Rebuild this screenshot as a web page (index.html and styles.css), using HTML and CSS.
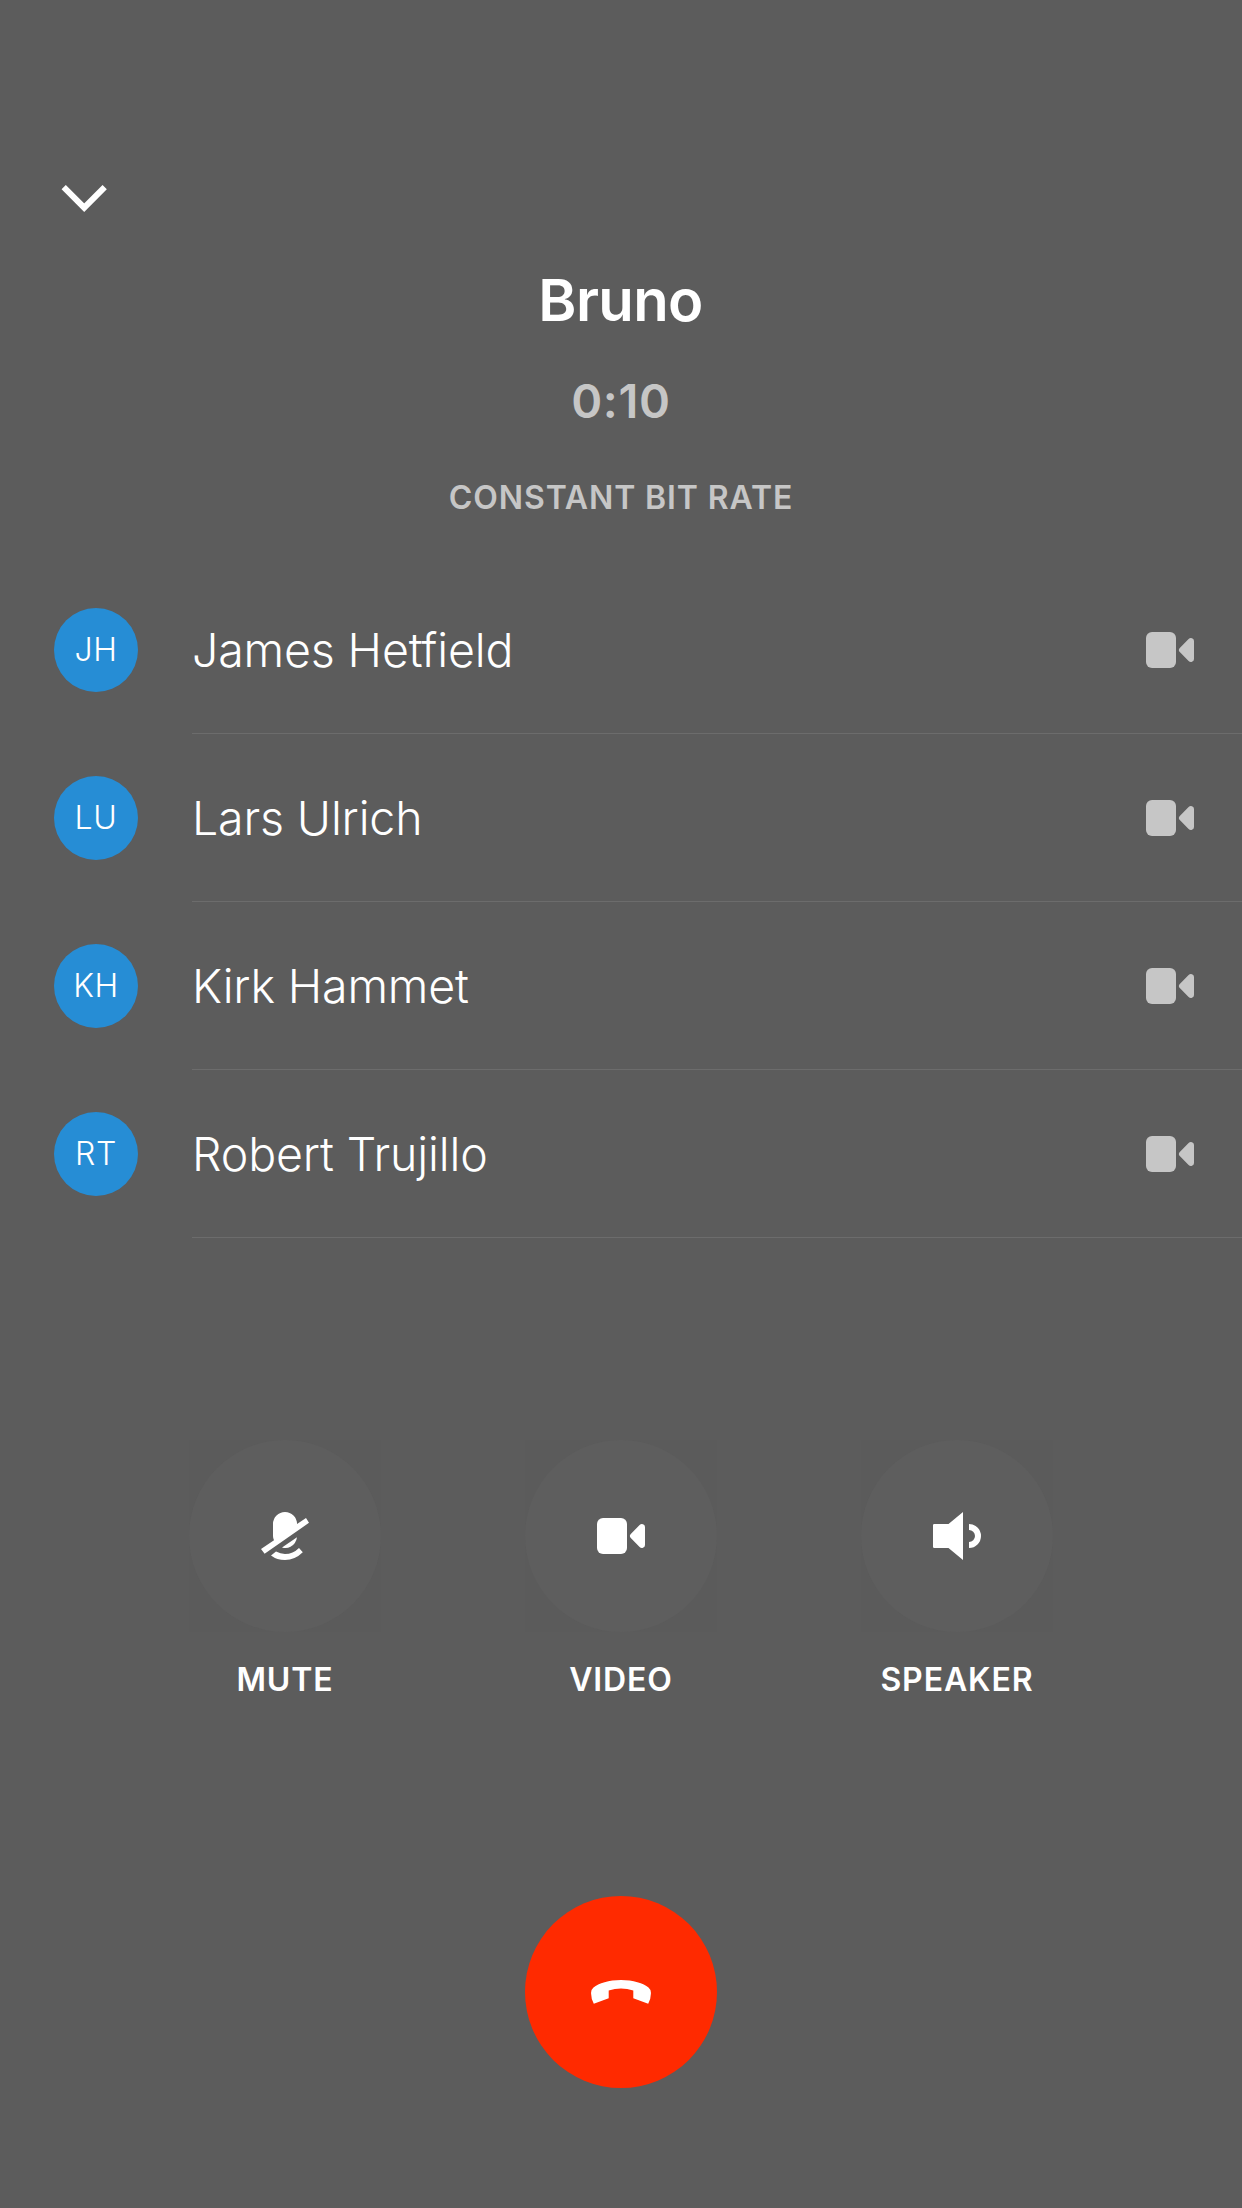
FILE: index.html
```
<!DOCTYPE html>
<html lang="en">
<head>
  <meta charset="utf-8">
  <title>Bruno</title>
  <link rel="stylesheet" href="styles.css">
</head>
<body>
  <svg class="sprite" aria-hidden="true">
    <symbol id="camera" viewBox="0 0 48 36">
      <rect width="30" height="36" rx="6"/>
      <path d="M33.8 15.9 42.6 7Q44 5.6 46 6.2Q48 6.8 48 9V27Q48 29.2 46 29.8Q44 30.4 42.6 29L33.8 20.1Q31.9 18 33.8 15.9Z"/>
    </symbol>
  </svg>

  <main class="call">
    <button class="minimize" aria-label="Minimize">
      <svg width="46" height="28" viewBox="0 0 46 28"><path d="M2.7 2.1 23.2 22.7 43.7 2.1" fill="none" stroke="#fff" stroke-width="6"/></svg>
    </button>

    <header class="header">
      <h1 class="title">Bruno</h1>
      <div class="timer">0:10</div>
      <div class="bitrate">CONSTANT BIT RATE</div>
    </header>

    <ul class="people">
      <li class="person">
        <span class="avatar">JH</span>
        <div class="info"><span class="name">James Hetfield</span><svg class="camera"><use href="#camera"/></svg></div>
      </li>
      <li class="person">
        <span class="avatar">LU</span>
        <div class="info"><span class="name">Lars Ulrich</span><svg class="camera"><use href="#camera"/></svg></div>
      </li>
      <li class="person">
        <span class="avatar">KH</span>
        <div class="info"><span class="name">Kirk Hammet</span><svg class="camera"><use href="#camera"/></svg></div>
      </li>
      <li class="person">
        <span class="avatar">RT</span>
        <div class="info"><span class="name">Robert Trujillo</span><svg class="camera"><use href="#camera"/></svg></div>
      </li>
    </ul>

    <div class="controls">
      <button class="control">
        <span class="tile"><span class="disc">
          <svg width="48" height="48" viewBox="0 0 48 48">
            <path d="M12 12a12 12 0 0 1 24 0L45 6l3 4.8L3.6 41.7 0 37l13-8.7Q12 26.5 12 24Z"/>
            <path d="M36 25.3Q35 32 29.5 34.8Q25.5 36.8 21 35.4Z"/>
            <path d="M15 39.6Q19.5 42 24 42Q32 42 38 36L41.8 40.3Q34 48 24 48Q16 48 10 43.4Z"/>
          </svg>
        </span></span>
        <span class="label">MUTE</span>
      </button>
      <button class="control">
        <span class="tile"><span class="disc"><svg width="48" height="36"><use href="#camera"/></svg></span></span>
        <span class="label">VIDEO</span>
      </button>
      <button class="control">
        <span class="tile"><span class="disc">
          <svg width="48" height="48" viewBox="0 0 48 48">
            <path d="M1.2 12H15.5L30 0V48L15.5 36H1.2Q0 36 0 34.8V13.2Q0 12 1.2 12Z"/>
            <path d="M36 12a12 12 0 0 1 0 24v-6a6 6 0 0 0 0-12Z"/>
          </svg>
        </span></span>
        <span class="label">SPEAKER</span>
      </button>
    </div>

    <button class="hangup" aria-label="End call">
      <svg width="60" height="24" viewBox="0 0 60 24"><path d="M30 0C42 0 52.5 3.2 57.5 7.6Q59.7 9.5 59.9 12.5Q60.2 18 57.2 23.8L42.3 18.3V10.5Q30 6.4 17.7 10.5V18.3L2.8 23.8Q-.2 18 .1 12.5Q.3 9.5 2.5 7.6C7.5 3.2 18 0 30 0Z"/></svg>
    </button>
  </main>
</body>
</html>
```
FILE: styles.css
```
* {
  box-sizing: border-box;
}

body {
  margin: 0;
  background: #5c5c5c;
  color: #fff;
  font-family: Inter, "Liberation Sans", sans-serif;
}

svg {
  display: block;
  fill: currentColor;
}

button {
  padding: 0;
  border: 0;
  background: none;
  color: inherit;
  font: inherit;
}

.sprite {
  width: 0;
  height: 0;
  float: left;
}

.call {
  display: flex;
  flex-direction: column;
  height: 2208px;
  padding-top: 185px;
}

.minimize {
  align-self: flex-start;
  height: 28px;
  margin-left: 61px;
}

.header {
  display: flex;
  flex-direction: column;
  align-items: center;
  height: 353px;
  padding-top: 52px;
}

.title {
  margin: 0;
  padding-right: 1px;
  font-size: 58px;
  font-weight: 600;
  line-height: 70px;
  letter-spacing: -0.64px;
}

.timer {
  margin-top: 36px;
  color: #c6c6c6;
  font-size: 47px;
  font-weight: 600;
  line-height: 60px;
  letter-spacing: 0.7px;
}

.bitrate {
  margin-top: 47px;
  color: #c6c6c6;
  font-size: 32px;
  font-weight: 600;
  line-height: 40px;
  letter-spacing: 0.88px;
}

.people {
  margin: 0;
  padding: 0;
  list-style: none;
}

.person {
  display: flex;
  align-items: center;
  height: 168px;
  padding-left: 54px;
}

.avatar {
  width: 84px;
  height: 84px;
  margin-right: 54px;
  border-radius: 50%;
  background: #268dd5;
  font-size: 32px;
  font-weight: 300;
  line-height: 84px;
  letter-spacing: 0.6px;
  text-align: center;
}

.info {
  display: flex;
  flex: 1;
  align-items: center;
  justify-content: space-between;
  height: 168px;
  padding: 1px 48px 0 0;
  border-bottom: 1px solid #6c6c6c;
}

.name {
  font-size: 46.5px;
  font-weight: 300;
  letter-spacing: -0.15px;
}

.camera {
  width: 48px;
  height: 36px;
  color: #c6c6c6;
}

.controls {
  display: grid;
  grid-template-columns: repeat(3, 336px);
  justify-content: center;
  margin-top: 202px;
}

.control {
  display: flex;
  flex-direction: column;
  align-items: center;
  gap: 28px;
}

.tile {
  background: #5b5b5b;
}

.disc {
  display: flex;
  align-items: center;
  justify-content: center;
  width: 192px;
  height: 192px;
  border-radius: 50%;
  background: #5e5e5e;
}

.label {
  font-size: 32px;
  font-weight: 600;
  line-height: 40px;
  letter-spacing: 0.9px;
}

.hangup {
  display: flex;
  align-items: center;
  justify-content: center;
  align-self: center;
  width: 192px;
  height: 192px;
  margin-top: 196px;
  border-radius: 50%;
  background: #ff2a00;
}
```
